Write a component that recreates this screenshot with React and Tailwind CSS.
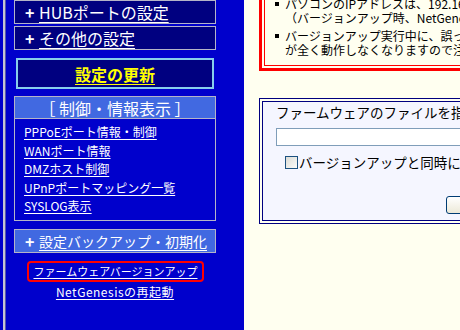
import React from "react";

// 左メニュー（設定リンク一覧）
const LINKS = [
  "PPPoEポート情報・制御",
  "WANポート情報",
  "DMZホスト制御",
  "UPnPポートマッピング一覧",
  "SYSLOG表示",
];

const FONT = "font-['Noto_Sans_CJK_JP','Noto_Sans',sans-serif]";

const MenuBox = ({ label, className = "", textClass = "text-[16px]" }) => (
  <div
    className={`flex h-[24px] items-center border border-[#b4b4c8] pl-[10px] text-white ${className}`}
  >
    <span className="w-[14px] text-[16px] font-bold leading-none">+</span>
    <span className={`whitespace-nowrap underline underline-offset-[3px] leading-none ${textClass}`}>
      {label}
    </span>
  </div>
);

const Sidebar = () => (
  <div className="flex h-full w-[244px] shrink-0 bg-[#0000cc]">
    {/* frame edge */}
    <div className="flex h-full w-[6px] shrink-0">
      <div className="w-[3px] bg-[#0000cc]" />
      <div className="w-[2px] bg-[#c4c4d4]" />
      <div className="w-[1px] bg-[#5858a8]" />
    </div>

    <div className="ml-[8px] flex w-[202px] flex-col">
      <MenuBox label="HUBポートの設定" className="bg-[#000080]" />
      <MenuBox label="その他の設定" className="mt-[2px] bg-[#000080]" />

      <div className="mx-[2px] mt-[8px] flex h-[31px] items-center justify-center border-2 border-[#87ceeb] bg-[#000080]">
        <span className="text-[16px] font-bold leading-none text-[#ffff00] underline underline-offset-[3px]">
          設定の更新
        </span>
      </div>

      {/* 制御・情報表示 */}
      <div className="mt-[7px] border border-[#b4b4c8]">
        <div className="flex h-[22px] items-center justify-center border-b border-[#b4b4c8] bg-[#4169e1] text-[16px] leading-none text-white">
          ［ 制御・情報表示 ］
        </div>
        <div className="flex flex-col pb-[4px] pl-[9px] pt-[4px]">
          {LINKS.map((l) => (
            <span
              key={l}
              className="whitespace-nowrap text-[12px] leading-[18.5px] text-white underline underline-offset-[2px]"
            >
              {l}
            </span>
          ))}
        </div>
      </div>

      <MenuBox
        label="設定バックアップ・初期化"
        className="mt-[8px] bg-[#4169e1]"
        textClass="text-[14px]"
      />

      <div className="ml-[13px] mt-[8px] flex h-[21px] w-[177px] items-center justify-center rounded-[4px] border-2 border-[#ff0000]">
        <span className="whitespace-nowrap text-[11px] leading-none text-white underline underline-offset-[2px]">
          ファームウェアバージョンアップ
        </span>
      </div>
      <div className="mt-[1px] whitespace-nowrap text-center text-[12px] leading-[18px] tracking-[0.5px] text-white">
        <span className="underline underline-offset-[2px]">NetGenesisの再起動</span>
      </div>
    </div>
  </div>
);

const Bullet = ({ lines, className = "" }) => (
  <div className={`flex ${className}`}>
    <div className="flex w-[10px] shrink-0 pt-[5px]">
      <span className="h-[4px] w-[4px] bg-black" />
    </div>
    <div className="flex flex-col">
      {lines.map((t) => (
        <span key={t} className="whitespace-nowrap leading-[13.5px]">
          {t}
        </span>
      ))}
    </div>
  </div>
);

const Content = () => (
  <div className="flex h-full flex-1 flex-col overflow-hidden bg-[#fffff0] pl-[15px] text-black">
    {/* 注意事項 */}
    <div className="-mt-[13px] w-[520px] shrink-0 border-[3px] border-[#ff0000] p-[2px] text-[12px]">
      <div className="border border-[#ff0000] pb-[9px] pl-[10px] pt-[4px]">
        <Bullet
          lines={[
            "パソコンのIPアドレスは、192.168.0.2～192.168.0.254 に設定してください。",
            "（バージョンアップ時、NetGenesisのIPアドレスは初期化されません）",
          ]}
        />
        <Bullet
          className="mt-[5px]"
          lines={[
            "バージョンアップ実行中に、誤って電源を切ったりすると本製品",
            "が全く動作しなくなりますので注意してください。",
          ]}
        />
      </div>
    </div>

    {/* ファイル選択 */}
    <div className="mt-[27px] w-[520px] shrink-0 border border-[#000080] p-[2px] text-[13.5px]">
      <div className="border border-[#000080] bg-[#f5f6ff] pb-[6px] pl-[13px] pt-[3px]">
        <div className="whitespace-nowrap leading-[15px]">
          ファームウェアのファイルを指定してください。
        </div>
        <div className="mt-[8px] h-[18px] w-[420px] border border-[#7f9db9] bg-white" />
        <div className="mt-[9px] flex items-center pl-[9px]">
          <span className="h-[13px] w-[13px] shrink-0 border border-[#1c5180] bg-gradient-to-br from-[#dcdcd6] to-[#fbfbf9]" />
          <span className="ml-[1px] whitespace-nowrap leading-[15px]">
            バージョンアップと同時に設定を初期化する
          </span>
        </div>
        <div className="ml-[170px] mt-[26px] h-[18px] w-[80px] rounded-[3px] border border-[#003c74] bg-gradient-to-b from-[#ffffff] to-[#ece9d8]" />
      </div>
    </div>
  </div>
);

export default function App() {
  return (
    <div className={`flex h-[330px] w-[460px] overflow-hidden ${FONT}`}>
      <Sidebar />
      <Content />
    </div>
  );
}
